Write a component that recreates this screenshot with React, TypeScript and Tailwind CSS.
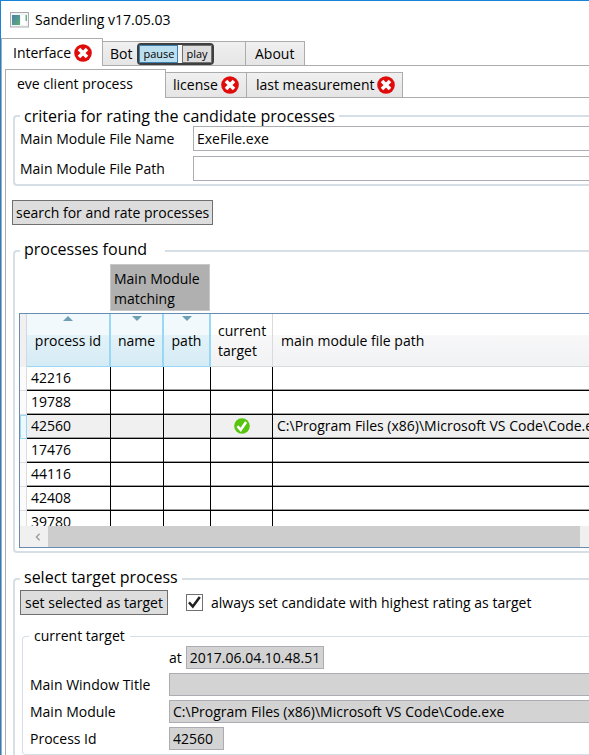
import { useState } from "react";
import type { ReactNode } from "react";

function ErrorIcon() {
  return (
    <svg viewBox="0 0 18 18" className="size-[18px] shrink-0" aria-hidden="true">
      <circle cx="9" cy="9" r="8.8" fill="#e00b0b" />
      <path d="M5 5l8 8M13 5l-8 8" stroke="#fff" strokeWidth="3.6" />
    </svg>
  );
}

function OkIcon() {
  return (
    <svg viewBox="0 0 16 16" className="mx-auto size-4" aria-label="current target">
      <circle cx="8" cy="8" r="7.8" fill="#57c40d" />
      <path d="M3.4 8.2l3.3 3.6 5.4-7.8" stroke="#fff" strokeWidth="2.6" fill="none" />
    </svg>
  );
}

function AppIcon() {
  return (
    <svg viewBox="0 0 19 16" className="h-4 w-[19px]" aria-hidden="true">
      <defs>
        <linearGradient id="screen" x1="0" y1="0" x2="1" y2="1">
          <stop offset="0" stopColor="#4a7fb0" />
          <stop offset="1" stopColor="#5cae72" />
        </linearGradient>
      </defs>
      <rect x="0.5" y="0.5" width="18" height="14.5" fill="#f2f4f5" stroke="#a9adb0" />
      <rect x="2" y="3" width="8" height="10" fill="url(#screen)" />
      <rect x="11" y="3" width="5" height="10" fill="#fff" />
      <rect x="15.5" y="3" width="1.5" height="6" fill="#6fb08c" />
    </svg>
  );
}

function SortArrow({ up }: { up?: boolean }) {
  return (
    <svg viewBox="0 0 10 5" className="absolute inset-x-0 top-[2px] mx-auto h-[5px] w-[10px]" aria-hidden="true">
      <path d={up ? "M0 5L5 0l5 5z" : "M0 0h10L5 5z"} fill="#6f9fb5" />
    </svg>
  );
}

const idleTab =
  "flex items-center border border-l-0 border-[#acacac] bg-linear-to-b from-[#f0f0f0] to-[#e5e5e5]";

function Group({
  title,
  className,
  legendClass,
  children,
}: {
  title: string;
  className: string;
  legendClass: string;
  children: ReactNode;
}) {
  return (
    <fieldset className={`min-w-0 rounded-l border-r-0 border-[#d5dfe5] ${className}`}>
      <legend className={`h-5 ${legendClass}`}>{title}</legend>
      {children}
    </fieldset>
  );
}

const processes = [
  { id: "42216" },
  { id: "19788" },
  { id: "42560", path: "C:\\Program Files (x86)\\Microsoft VS Code\\Code.exe" },
  { id: "17476" },
  { id: "44116" },
  { id: "42408" },
  { id: "39780" },
];

const sortedHead =
  "relative h-[53px] border-r-2 border-b border-[#98d8f5] bg-linear-to-b from-[#f1f9fc] from-40% via-[#e3f2f8] via-40% to-[#d5ebf5] p-0 pt-[2px] font-normal";
const plainHead =
  "h-[53px] border-b border-[#d9dadc] bg-linear-to-b from-white from-40% via-[#f8f8f9] via-40% to-[#f1f2f4] p-0 pt-[2px] text-left font-normal";
const cell = "h-6 overflow-hidden border-b border-black p-0 pb-[2px] shadow-[inset_0_-1px_0_#a0a0a0]";

function ProcessTable() {
  return (
    <div className="border border-r-0 border-[#688caf]">
      <div className="h-[212px] overflow-hidden">
        <table className="w-full table-fixed border-separate border-spacing-0">
          <colgroup>
            <col className="w-[7px]" />
            <col className="w-[84px]" />
            <col className="w-[53px]" />
            <col className="w-[47px]" />
            <col className="w-[62px]" />
            <col />
          </colgroup>
          <thead>
            <tr>
              <td className="border-r border-[#d0d8e0] bg-[#f0f0f0]" />
              <th className={sortedHead}>
                <SortArrow up />
                process id
              </th>
              <th className={sortedHead}>
                <SortArrow />
                name
              </th>
              <th className={sortedHead}>
                <SortArrow />
                path
              </th>
              <th className={`${plainHead} border-r pl-[7px] leading-5`}>current target</th>
              <th className={`${plainHead} pl-2`}>main module file path</th>
            </tr>
          </thead>
          <tbody>
            {processes.map((p) => (
              <tr key={p.id} className={p.path ? "bg-[#f0f0f0]" : "bg-white"}>
                <td
                  className={
                    p.path
                      ? "border border-[#98d8f5] bg-[#eef8fc] p-0"
                      : "border-r border-b border-[#dcdde0] bg-[#fbfbfc] p-0"
                  }
                />
                <td className={`${cell} border-r pl-1`}>{p.id}</td>
                <td className={`${cell} border-r`} />
                <td className={`${cell} border-r`} />
                <td className={`${cell} border-r`}>{p.path && <OkIcon />}</td>
                <td className={`${cell} pl-1 whitespace-nowrap`}>{p.path}</td>
              </tr>
            ))}
          </tbody>
        </table>
      </div>
      <div className="flex h-[21px] bg-[#f0f0f0] pr-[9px] pl-2">
        <button type="button" aria-label="scroll left" className="flex w-5 items-center justify-center">
          <svg viewBox="0 0 6 10" className="h-2 w-[6px]" aria-hidden="true">
            <path d="M5 1L1 5l4 4" fill="none" stroke="#999" strokeWidth="1.6" />
          </svg>
        </button>
        <div className="flex-1 bg-[#cdcdcd]" />
      </div>
    </div>
  );
}

const textBox = "h-[25px] min-w-0 border border-r-0 border-[#abadb3] bg-white px-[3px] outline-none";
const readOnlyBox = "h-[23px] min-w-0 border border-[#abadb3] bg-[#d3d3d3] px-[3px] outline-none";
const pushButton = "h-[25px] border border-[#707070] bg-[#dddddd] px-[3px] whitespace-nowrap";

export default function App() {
  const [always, setAlways] = useState(true);
  return (
    <div className="overflow-hidden border-t border-l border-[#1883d7] bg-white font-['Open_Sans','Noto_Sans',sans-serif] text-[14px] leading-5 text-black">
      <header className="flex h-[37px] items-center gap-[6px] pl-[9px]">
        <AppIcon />
        <h1>Sanderling v17.05.03</h1>
      </header>

      <nav className="flex items-end">
        <button
          type="button"
          className="flex h-[28px] w-[102px] items-center gap-[3px] border border-b-0 border-[#acacac] bg-white pl-[11px]"
        >
          Interface <ErrorIcon />
        </button>
        <div className={`${idleTab} h-[25px] w-[143px] pl-[7px]`}>
          <button type="button">Bot</button>
          <div className="ml-[5px] flex h-[22px] gap-1 rounded border-2 border-[#3f3f3f] bg-[#f4f4f4] text-[11px] leading-4">
            <button type="button" className="border border-[#3c7fb1] bg-[#bcdff0] px-[3px]">
              pause
            </button>
            <button type="button" className="border border-[#707070] bg-[#dddddd] px-[3px]">
              play
            </button>
          </div>
        </div>
        <button type="button" className={`${idleTab} h-[25px] w-[59px] pl-[9px]`}>
          About
        </button>
        <div className="flex-1 border-b border-[#acacac]" />
      </nav>

      <main className="border-l border-[#acacac] pt-[3px] pl-[3px]">
        <nav className="flex items-end">
          <button
            type="button"
            className="flex h-[29px] w-[161px] items-center border border-b-0 border-[#acacac] bg-white pl-[11px]"
          >
            eve client process
          </button>
          <button type="button" className={`${idleTab} h-[26px] w-[81px] gap-[3px] pl-[7px]`}>
            license <ErrorIcon />
          </button>
          <button type="button" className={`${idleTab} h-[26px] w-[156px] gap-[3px] pl-[9px]`}>
            last measurement <ErrorIcon />
          </button>
          <div className="flex-1 border-b border-[#acacac]" />
        </nav>

        <div className="border-l border-[#acacac] pt-2 pl-[6px]">
          <Group
            title="criteria for rating the candidate processes"
            className="ml-px border-2"
            legendClass="ml-[5px] px-[4px] text-[16px] leading-5"
          >
            <div className="grid grid-cols-[173px_1fr] items-center gap-y-[5px] pb-[3px] pl-[5px]">
              <label htmlFor="fileName">Main Module File Name</label>
              <input id="fileName" className={textBox} defaultValue="ExeFile.exe" />
              <label htmlFor="filePath">Main Module File Path</label>
              <input id="filePath" className={textBox} />
            </div>
          </Group>

          <button type="button" className={`${pushButton} mt-[14px]`}>
            search for and rate processes
          </button>

          <Group
            title="processes found"
            className="mt-4 ml-px border-2"
            legendClass="ml-[5px] w-[145px] px-[4px] text-[16px] leading-4"
          >
            <div className="pt-[3px] pb-[3px] pl-[4px]">
              <div className="mb-[2px] ml-[91px] h-[47px] w-[100px] border border-[#c8c8c8] bg-[#b0b0b0] px-[3px] pt-1">
                Main Module matching
              </div>
              <ProcessTable />
            </div>
          </Group>

          <Group
            title="select target process"
            className="mt-4 ml-px border-2"
            legendClass="ml-[5px] px-[4px] text-[16px] leading-4"
          >
            <div className="pt-px pb-2 pl-[5px]">
              <div className="flex items-center">
                <button type="button" className={`${pushButton} w-[148px]`}>
                  set selected as target
                </button>
                <label className="ml-[18px] flex items-center gap-2 whitespace-nowrap">
                  <span className="relative size-[17px]">
                    <input
                      type="checkbox"
                      checked={always}
                      onChange={(e) => setAlways(e.target.checked)}
                      className="block size-[17px] appearance-none border border-[#707070] bg-white"
                    />
                    {always && (
                      <svg viewBox="0 0 17 17" className="pointer-events-none absolute inset-0" aria-hidden="true">
                        <path d="M3 8.4l3.8 4.2L13.8 3" fill="none" stroke="#212121" strokeWidth="2.5" />
                      </svg>
                    )}
                  </span>
                  always set candidate with highest rating as target
                </label>
              </div>
              <Group
                title="current target"
                className="mt-[11px] ml-[2px] border"
                legendClass="ml-[6px] px-[5px] text-[14px] leading-5"
              >
                <div className="grid grid-cols-[139px_1fr] items-center gap-y-1 pb-1 pl-[7px]">
                  <div className="col-start-2 flex items-center gap-1">
                    <label htmlFor="at">at</label>
                    <input id="at" readOnly className={`${readOnlyBox} w-[138px]`} value="2017.06.04.10.48.51" />
                  </div>
                  <label htmlFor="windowTitle">Main Window Title</label>
                  <input id="windowTitle" readOnly className={`${readOnlyBox} border-r-0`} value="" />
                  <label htmlFor="module">Main Module</label>
                  <input
                    id="module"
                    readOnly
                    className={`${readOnlyBox} border-r-0`}
                    value={"C:\\Program Files (x86)\\Microsoft VS Code\\Code.exe"}
                  />
                  <label htmlFor="pid">Process Id</label>
                  <input id="pid" readOnly className={`${readOnlyBox} w-[55px]`} value="42560" />
                </div>
              </Group>
            </div>
          </Group>
        </div>
      </main>
    </div>
  );
}
